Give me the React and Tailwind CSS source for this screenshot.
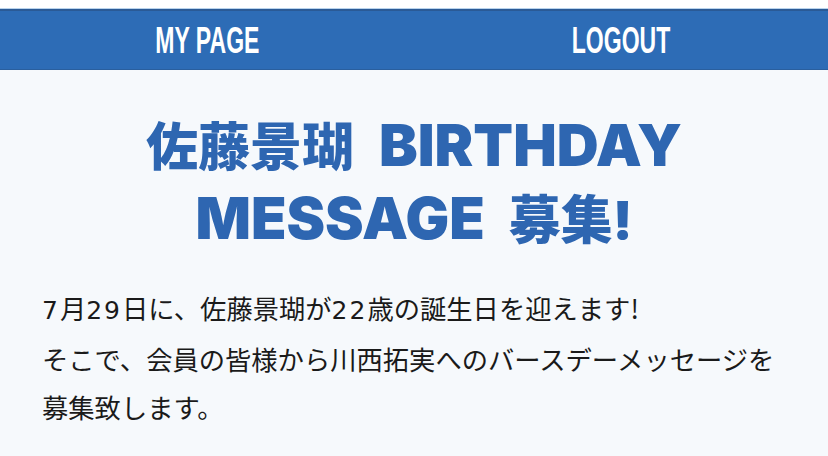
export default function App() {
  const navFont = { fontFamily: '"Liberation Sans Narrow", "Liberation Sans", sans-serif' };
  const digitFont = { fontFamily: '"DejaVu Sans", sans-serif' };

  return (
    <div className="w-[828px] h-[456px] overflow-hidden bg-[#f6f9fc]">
      {/* top strip */}
      <div className="h-[8px] bg-white" />
      <div className="h-[1px] bg-[#b9d3ec]" />
      <nav className="h-[61px] bg-[#2d6cb6] border-t-2 border-t-[#2a5a96] border-b border-b-[#2a5f9e] grid grid-cols-2">
        <a className="flex items-center justify-center text-white">
          <span className="inline-block text-[36px] font-bold scale-x-[0.64] leading-none pt-[2px]" style={navFont}>
            MY PAGE
          </span>
        </a>
        <a className="flex items-center justify-center text-white">
          <span className="inline-block text-[36px] font-bold scale-x-[0.64] leading-none pt-[2px]" style={navFont}>
            LOGOUT
          </span>
        </a>
      </nav>

      <main className="px-[42px]">
        <h1
          className="mt-[40px] text-center text-[#2e66b1] text-[52px] leading-[70px] font-black"
          style={{ fontFamily: 'Inter, "Noto Sans CJK JP", sans-serif' }}
        >
          佐藤景瑚<span className="text-[58px] ml-[25px]">BIRTHDAY</span>
          <br />
          <span className="text-[58px] mr-[24px]">MESSAGE</span>募集!
        </h1>

        <div
          className="mt-[28px] text-[#1a1a1a] text-[26.3px] leading-[48px]"
          style={{ fontFamily: '"Noto Sans CJK JP", sans-serif' }}
        >
          <p>
            <span className="tracking-[2px] text-[25px]" style={digitFont}>7</span>月
            <span className="tracking-[2px] text-[25px]" style={digitFont}>29</span>日に、佐藤景瑚が
            <span className="tracking-[2px] text-[25px]" style={digitFont}>22</span>歳の誕生日を迎えます!
          </p>
          <p>そこで、会員の皆様から川西拓実へのバースデーメッセージを募集致します。</p>
        </div>
      </main>
    </div>
  );
}
